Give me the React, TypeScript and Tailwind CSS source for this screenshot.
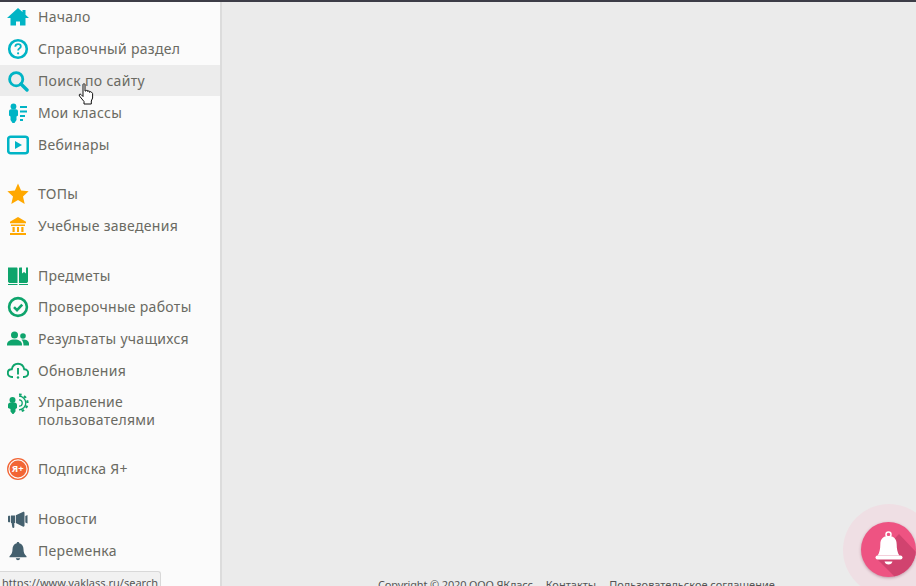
import type { ReactNode } from "react";

const teal = "#00b4c5";
const green = "#0ea46c";
const orange = "#ffa800";
const slate = "#44606e";

function Icon({ children }: { children: ReactNode }) {
  return (
    <svg viewBox="0 0 22 22" className="w-[22px] h-[22px] shrink-0">
      {children}
    </svg>
  );
}

const HomeIcon = () => (
  <Icon>
    <path d="M11 2 0 12h3.500v7.500h5.500v-4h4v4h5.500V12H22l-3.500-3.200V4h-3v2z" fill={teal} />
  </Icon>
);
const HelpIcon = () => (
  <Icon>
    <circle cx="11" cy="11" r="8.800" fill="none" stroke={teal} strokeWidth="2.600" />
    <path d="M8.300 8.800c.1-1.700 1.200-2.600 2.800-2.600s2.700.9 2.700 2.200c0 2-2.700 2-2.700 4" fill="none" stroke={teal} strokeWidth="1.800" />
    <circle cx="11.100" cy="15.300" r="1.100" fill={teal} />
  </Icon>
);
const SearchIcon = () => (
  <Icon>
    <circle cx="9.200" cy="9.200" r="6.600" fill="none" stroke={teal} strokeWidth="2.800" />
    <path d="M14 14l6 6" stroke={teal} strokeWidth="3.400" strokeLinecap="round" />
  </Icon>
);
const ClassesIcon = () => (
  <Icon>
    <circle cx="6.500" cy="4.500" r="2.900" fill={teal} />
    <path d="M2 9.500c0-1.400 1-2.200 2.200-2.200h4.600c1.200 0 2.200.8 2.200 2.200v4l-1.500 1v3.500l-2 3h-2l-2-3v-3.500l-1.500-1z" fill={teal} />
    <path d="M13 5h7M13 9.500h7M13 14h5M13 18h3" stroke={teal} strokeWidth="1.800" />
  </Icon>
);
const WebinarIcon = () => (
  <Icon>
    <rect x="1.200" y="2.800" width="19.600" height="16.400" rx="2.500" fill="none" stroke={teal} strokeWidth="2.600" />
    <path d="M8 7l7 4-7 4z" fill={teal} />
  </Icon>
);
const StarIcon = () => (
  <Icon>
    <path d="M11 .5l3.100 7 7.500.8-5.600 5.100 1.700 7.500L11 17.100 4.300 20.900 6 13.400.4 8.300l7.500-.8z" fill={orange} />
  </Icon>
);
const BankIcon = () => (
  <Icon>
    <path d="M11 2 3 6.800v1.400h16V6.800z" fill={orange} />
    <path d="M4 9.500h14V11H4zM5.500 12h2.200v5H5.500zM10 12h2v5h-2zM14.300 12h2.200v5h-2.200zM3 18h16v2H3z" fill={orange} />
  </Icon>
);
const BooksIcon = () => (
  <Icon>
    <path d="M1 2.500h8.500c.6 0 1 .4 1 1V18H3c-1 0-2-.6-2-1.500zM12 3.500c0-.6.4-1 1-1h2v6l2-1.500 2 1.500v-6h2v14c0 .9-1 1.500-2 1.500h-7z" fill={green} />
    <path d="M1 19.500h9.500M12 19.500h9" stroke={green} strokeWidth="1.200" />
  </Icon>
);
const CheckIcon = () => (
  <Icon>
    <circle cx="11" cy="11" r="8.900" fill="none" stroke={green} strokeWidth="2.600" />
    <path d="M7 11.200l3 3 5.200-5.600" fill="none" stroke={green} strokeWidth="2.600" />
  </Icon>
);
const UsersIcon = () => (
  <Icon>
    <circle cx="7.500" cy="7" r="3.500" fill={green} />
    <circle cx="16" cy="8" r="2.800" fill={green} />
    <path d="M0 16.500c0-3 3-5 7.500-5S15 13.500 15 16.500v1H0z" fill={green} />
    <path d="M14.500 11.500c4 -.5 7.500 1 7.500 4v2h-5.500c0-2.500-.5-4.500-2-6z" fill={green} />
  </Icon>
);
const CloudIcon = () => (
  <Icon>
    <path d="M6 17H5c-2.500 0-4.200-1.800-4.200-4S2.500 9.200 4.800 9.200C5.500 6 8 3.800 11 3.800s5.500 2.200 6.200 5.400c2.300 0 4 1.700 4 3.800s-1.700 4-4.200 4h-1" fill="none" stroke={green} strokeWidth="1.900" />
    <path d="M11 8v6.500" stroke={green} strokeWidth="1.900" />
    <circle cx="11" cy="17.500" r="1.200" fill={green} />
  </Icon>
);
const ManageIcon = () => (
  <Icon>
    <path d="M12 3.200a6.800 6.800 0 0 1 0 13.600" fill="none" stroke={green} strokeWidth="1.300" />
    <path d="M12 1.500a8.500 8.500 0 0 1 0 17" fill="none" stroke={green} strokeWidth="2.200" strokeDasharray="2.600 2.700" />
    <path d="M12 6.800a3.200 3.200 0 0 1 0 6.400" fill="none" stroke={green} strokeWidth="1.300" />
    <circle cx="5.500" cy="7" r="3" fill={green} />
    <path d="M1 12c0-1.500 1-2.400 2.500-2.400h4c1.500 0 2.500.9 2.500 2.400v3l-1.500 1v2.500l-2 2.500h-1l-2-2.500V16L1 15z" fill={green} />
  </Icon>
);
const PlusIcon = () => (
  <svg viewBox="0 0 22 22" className="w-[22px] h-[22px] shrink-0">
    <circle cx="11" cy="11" r="10.300" fill="none" stroke="#f26535" strokeWidth="1.300" />
    <circle cx="11" cy="11" r="8.500" fill="#f26535" />
    <text x="10.800" y="14.300" textAnchor="middle" fontSize="9.500" fontWeight="700" fill="#fff" fontFamily="'Noto Sans', sans-serif">Я+</text>
  </svg>
);
const NewsIcon = () => (
  <Icon>
    <path d="M1 8.800c0-.6.4-1 1-1h1.200v6.500H2c-.6 0-1-.4-1-1z" fill={slate} />
    <path d="M4 7.500h4V15H7.300v4.300c0 .8-1.800.8-2 0L4.600 15H4z" fill={slate} />
    <path d="M8.800 7.300l7-3.300c1-.5 1.700 0 1.700 1V17.500c0 1-.7 1.500-1.700 1l-7-3.500z" fill={slate} />
    <path d="M18.300 8l2.200-1v8.500l-2.200-1z" fill={slate} />
  </Icon>
);
const BellSmall = () => (
  <Icon>
    <path d="M11 2c.8 0 1.300.5 1.300 1.300 2.800.7 4.200 3 4.200 6 0 3 .8 5 3 7v1H2.500v-1c2.200-2 3-4 3-7 0-3 1.400-5.300 4.200-6C9.700 2.500 10.200 2 11 2z" fill={slate} />
    <path d="M8.800 18.300h4.400c-.3 1.200-1.100 1.900-2.200 1.900s-1.900-.7-2.200-1.900z" fill={slate} />
  </Icon>
);

const labelClass = "text-[14px] leading-[18px] tracking-[0.3px] text-[#6a6a62]";

function Row({ icon, label, className = "py-[5px]" }: { icon: ReactNode; label: ReactNode; className?: string }) {
  return (
    <div className={`flex items-center gap-[9px] pl-[7px] ${className}`}>
      {icon}
      <span className={labelClass}>{label}</span>
    </div>
  );
}

export default function App() {
  return (
    <div className="relative w-[916px] h-[586px] overflow-hidden bg-[#ebebeb] font-['Noto_Sans',sans-serif]">
      <div className="absolute top-0 left-0 right-0 h-[2px] bg-[#3d3d47] z-10" />
      <div className="flex h-full">
        <nav className="w-[222px] shrink-0 bg-[#fbfbfb] border-r-2 border-[#dcdcdc] pt-px">
          <Row icon={<HomeIcon />} label="Начало" />
          <Row icon={<HelpIcon />} label="Справочный раздел" />
          <Row icon={<SearchIcon />} label="Поиск по сайту" className="pt-[5px] pb-[4px] mb-px bg-[#ececec]" />
          <Row icon={<ClassesIcon />} label="Мои классы" />
          <Row icon={<WebinarIcon />} label="Вебинары" />
          <div className="h-[17px]" />
          <Row icon={<StarIcon />} label="ТОПы" />
          <Row icon={<BankIcon />} label="Учебные заведения" />
          <div className="h-[18px]" />
          <Row icon={<BooksIcon />} label="Предметы" className="pt-[5px] pb-[4px]" />
          <Row icon={<CheckIcon />} label="Проверочные работы" />
          <Row icon={<UsersIcon />} label="Результаты учащихся" />
          <Row icon={<CloudIcon />} label="Обновления" />
          <div className="flex gap-[9px] pl-[7px] py-[6px]">
            <ManageIcon />
            <span className={labelClass}>
              Управление
              <br />
              пользователями
            </span>
          </div>
          <div className="h-[18px]" />
          <Row icon={<PlusIcon />} label="Подписка Я+" />
          <div className="h-[18px]" />
          <Row icon={<NewsIcon />} label="Новости" />
          <Row icon={<BellSmall />} label="Переменка" />
        </nav>
        <main className="flex-1 pt-[577px] pl-[156px] text-[11px] leading-[16px] text-[#555] whitespace-nowrap">
          <span className="tracking-[-0.15px]">Copyright © 2020 ООО ЯКласс</span>
          <span className="ml-[13px]">Контакты</span>
          <span className="ml-[13px]">Пользовательское соглашение</span>
        </main>
      </div>

      {/* status tooltip */}
      <div className="absolute left-0 bottom-0 w-[161px] h-[15px] bg-[#f1f1f1] border-t border-r border-[#d8d8d8] rounded-tr-[3px] pl-[2px] pt-[3px] text-[11px] leading-[15px] text-[#555] overflow-hidden whitespace-nowrap">
        https://www.yaklass.ru/search
      </div>

      {/* pointer */}
      <svg viewBox="0 0 17 22" className="absolute left-[78px] top-[83px] w-[17px] h-[22px]">
        <path
          d="M5 1.500c0-1 2-1 2 0V8l1 0c0-1 1.800-1 1.800 0v.6c0-1 1.800-1 1.800 0v.8c0-1 1.800-1 1.800 0 .6 0 1.200.5 1.200 1.200V15l-1.300 3v3H6v-2.500L1.500 13C.5 11.500 2 10.500 3 11.500L5 13.500z"
          fill="#fff"
          stroke="#111"
          strokeWidth="1"
        />
      </svg>

      {/* bell button */}
      <div className="absolute left-[843px] top-[504px] w-[92px] h-[92px] rounded-full bg-[#efdfe4]" />
      <div className="absolute left-[861px] top-[522px] w-[55px] h-[55px] rounded-full bg-[#ee5382] overflow-hidden shadow-[0_1px_3px_rgba(120,40,70,0.4)]">
        <svg viewBox="0 0 55 55" className="w-[55px] h-[55px]">
          <path d="M15 36 L34 55 H55 V30 L38 12z" fill="#d1436f" />
          <circle cx="27.500" cy="12.500" r="2.500" fill="none" stroke="#fff" strokeWidth="1.500" />
          <path d="M27.500 14c5.500 0 8.200 3 8.200 8.500 0 4.500.8 8 2.600 11H16.700c1.800-3 2.600-6.500 2.600-11 0-5.500 2.700-8.500 8.200-8.500z" fill="#fff" />
          <rect x="14.500" y="33.500" width="27" height="4" rx="2" fill="#fff" />
          <path d="M23.500 39.500h8c-.5 2-2 3-4 3s-3.500-1-4-3z" fill="#fff" />
        </svg>
      </div>
    </div>
  );
}
